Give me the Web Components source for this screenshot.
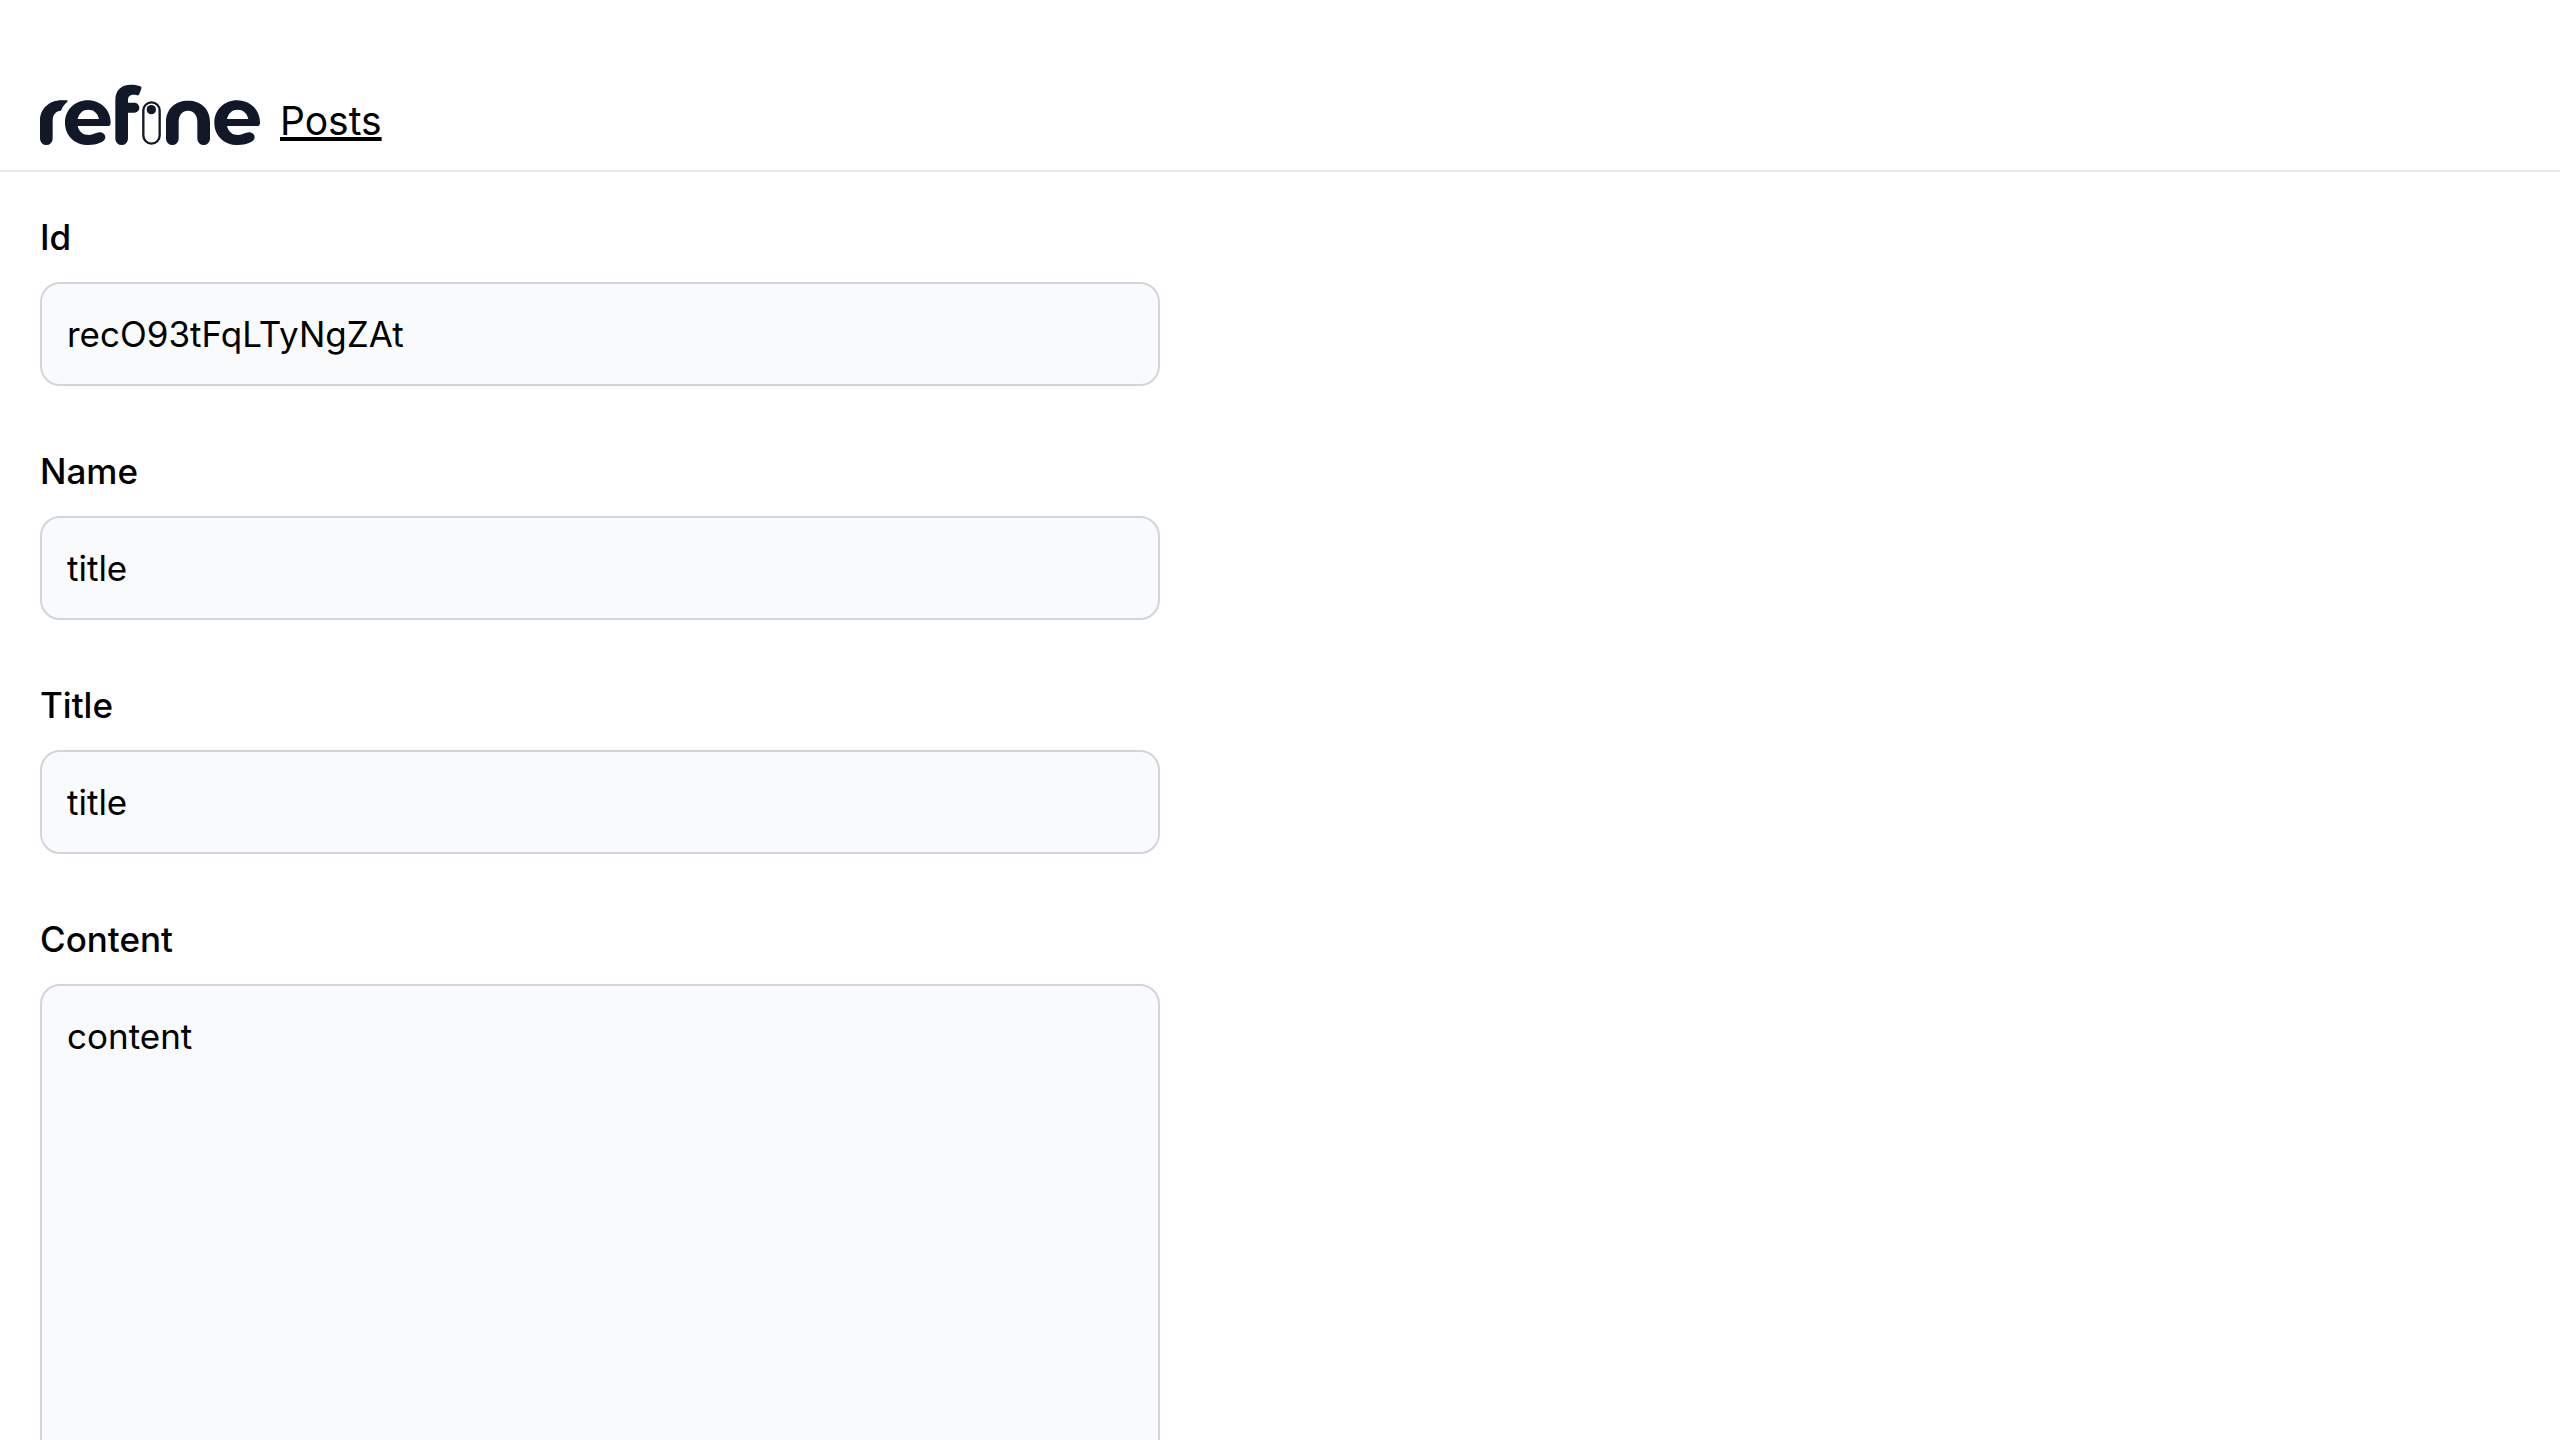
<!DOCTYPE html>
<html lang="en">
<head>
    <meta charset="utf-8">
    <meta name="viewport" content="width=device-width, initial-scale=1">
    <title>Posts</title>
    <style>
        * {
            box-sizing: border-box;
        }

        body {
            margin: 0;
            height: 100vh;
            overflow: hidden;
            background: #fff;
            color: #000;
            font-family: Inter, "Liberation Sans", sans-serif;
        }
    </style>
</head>
<body>
    <app-header>
        <refine-logo></refine-logo>
        <nav-link href="#posts">Posts</nav-link>
    </app-header>
    <post-form>
        <form-field label="Id" value="recO93tFqLTyNgZAt"></form-field>
        <form-field label="Name" value="title"></form-field>
        <form-field label="Title" value="title"></form-field>
        <form-field label="Content" value="content" rows="10"></form-field>
    </post-form>

    <script>
        /**
         * Custom Element: Header bar
         */
        class AppHeader extends HTMLElement {
            connectedCallback() {
                this.attachShadow({ mode: 'open' });
                this.shadowRoot.innerHTML = `
                    <style>
                        :host {
                            display: block;
                            border-bottom: 2px solid #e5e7eb;
                        }

                        nav {
                            display: flex;
                            align-items: flex-end;
                            gap: 20px;
                            padding: 80px 40px 20px;
                        }
                    </style>
                    <nav><slot></slot></nav>
                `;
            }
        }

        /**
         * Custom Element: Logo
         */
        class RefineLogo extends HTMLElement {
            connectedCallback() {
                this.attachShadow({ mode: 'open' });
                this.shadowRoot.innerHTML = `
                    <style>
                        :host {
                            display: block;
                        }

                        svg {
                            display: block;
                            width: 220px;
                            height: 70px;
                        }
                    </style>
                    <svg viewBox="60 30 660 210" fill="#111827" role="img" aria-label="refine">
                        <path d="M60 206V152C60 116 88 91 124 91H140Q145 92 142 95C132 104 126 113 123 122C107 123 98 134 98 152V206A19 19 0 0 1 60 206Z"/>
                        <path id="e" d="M203 91C243 91 272 120 272 158Q272 168 263 168H173C177 185 188 195 207 195C220 195 228 187 239 187C249 187 256 194 256 202C256 216 230 225 206 225C164 225 135 197 135 158C135 120 164 91 203 91ZM173 147H237C233 129 221 119 205 119C189 119 177 129 173 147Z"/>
                        <path d="M286 206V90C286 60 304 44 333 44C345 44 354 46 361 49Q366 51 364 56L358 72Q356 77 351 76C336 72 324 76 324 90V98H343A15 15 0 0 1 343 128H324V206A19 19 0 0 1 286 206Z"/>
                        <rect x="370" y="97" width="49" height="124" rx="24.5" fill="none" stroke="#111827" stroke-width="7"/>
                        <circle cx="394" cy="119" r="14"/>
                        <path d="M438 206V156C438 116 466 92 504 92C542 92 570 116 570 156V206A19 19 0 0 1 532 206V156C532 135 521 122 504 122C487 122 476 135 476 156V206A19 19 0 0 1 438 206Z"/>
                        <use href="#e" x="448"/>
                    </svg>
                `;
            }
        }

        /**
         * Custom Element: Navigation link
         */
        class NavLink extends HTMLElement {
            connectedCallback() {
                this.attachShadow({ mode: 'open' });
                this.shadowRoot.innerHTML = `
                    <style>
                        :host {
                            display: block;
                            font-size: 39px;
                            line-height: 58px;
                        }

                        a {
                            color: inherit;
                            text-decoration: underline;
                            text-decoration-thickness: 4px;
                            text-underline-offset: 2px;
                        }
                    </style>
                    <a href="${this.getAttribute('href') ?? '#'}"><slot></slot></a>
                `;
            }
        }

        /**
         * Custom Element: Form container
         */
        class PostForm extends HTMLElement {
            connectedCallback() {
                this.attachShadow({ mode: 'open' });
                this.shadowRoot.innerHTML = `
                    <style>
                        :host {
                            display: block;
                            padding: 40px;
                        }

                        form {
                            display: flex;
                            flex-direction: column;
                            gap: 60px;
                            max-width: 1120px;
                        }
                    </style>
                    <form><slot></slot></form>
                `;
            }
        }

        /**
         * Custom Element: Labelled text field, a textarea when "rows" is set
         */
        class FormField extends HTMLElement {
            connectedCallback() {
                this.attachShadow({ mode: 'open' });
                const label = this.getAttribute('label') ?? '';
                const value = this.getAttribute('value') ?? '';
                const rows = this.getAttribute('rows');
                const control = rows
                    ? `<textarea id="control" rows="${rows}">${value}</textarea>`
                    : `<input id="control" type="text" value="${value}">`;

                this.shadowRoot.innerHTML = `
                    <style>
                        :host {
                            display: block;
                            font-size: 35px;
                            line-height: 50px;
                        }

                        label {
                            display: block;
                            margin-bottom: 20px;
                            font-weight: 500;
                        }

                        input,
                        textarea {
                            display: block;
                            box-sizing: border-box;
                            width: 100%;
                            margin: 0;
                            padding: 25px;
                            border: 2px solid #d1d5db;
                            border-radius: 20px;
                            background: #f9fafb;
                            color: inherit;
                            font: inherit;
                            resize: none;
                        }
                    </style>
                    <label for="control">${label}</label>
                    ${control}
                `;
            }
        }

        // Register Elements
        window.customElements.define('app-header', AppHeader);
        window.customElements.define('refine-logo', RefineLogo);
        window.customElements.define('nav-link', NavLink);
        window.customElements.define('post-form', PostForm);
        window.customElements.define('form-field', FormField);
    </script>
</body>
</html>
